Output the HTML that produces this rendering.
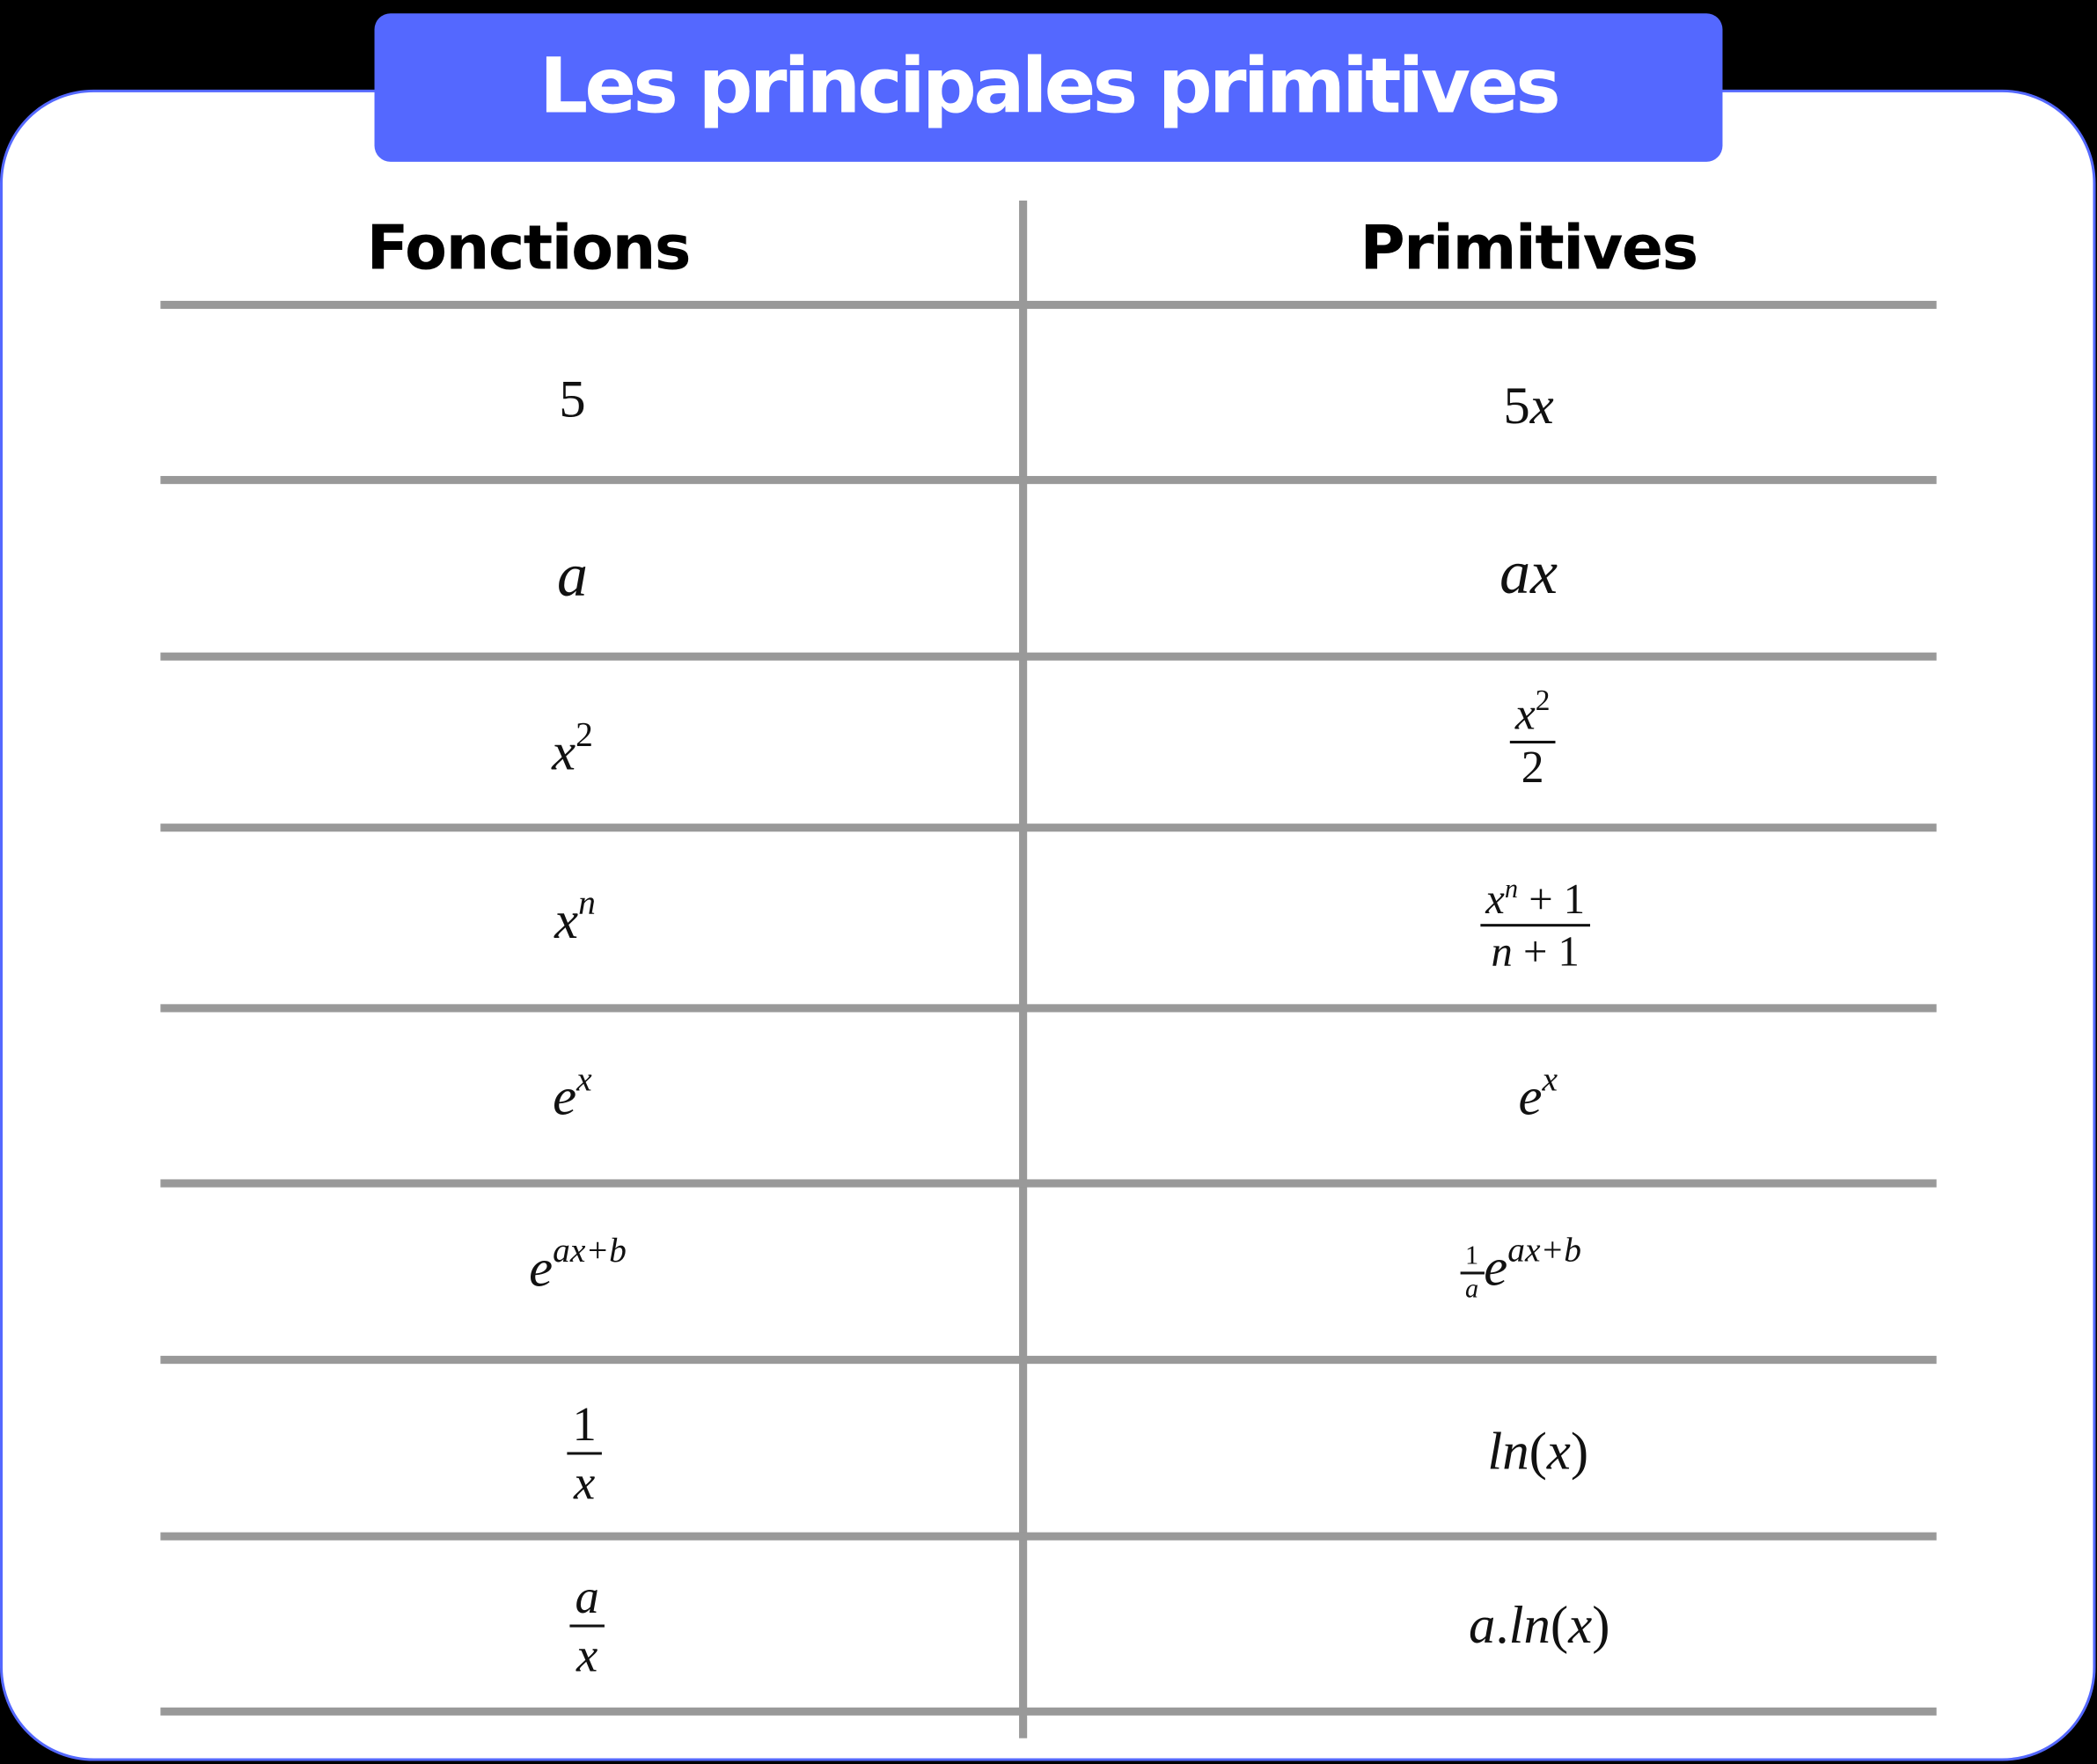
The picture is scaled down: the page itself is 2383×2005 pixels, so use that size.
<!DOCTYPE html>
<html><head><meta charset="utf-8"><style>
html,body{margin:0;padding:0;background:#000;width:2383px;height:2005px;overflow:hidden}
#w{position:absolute;left:0;top:0;width:1568px;height:1319px;transform:scale(1.51977);transform-origin:0 0}
.card{position:absolute;left:0;top:67px;height:1250px;background:#fff;border:2px solid #5468ff;border-radius:70px;box-sizing:border-box;width:1567px}
.title{position:absolute;left:280px;top:10px;width:1008px;height:111px;background:#5468ff;border-radius:12px;color:#fff;font:bold 57px "DejaVu Sans","Liberation Sans",sans-serif;text-align:center;line-height:110px;letter-spacing:-2.5px}
.h{position:absolute;left:120px;width:1328px;height:6px;background:#999}
.v{position:absolute;left:762px;top:150px;width:6px;height:1150px;background:#999}
.hd{position:absolute;top:150px;font:bold 46px "DejaVu Sans","Liberation Sans",sans-serif;width:500px;text-align:center;line-height:70px;letter-spacing:-1px}
.m{position:absolute;width:400px;text-align:center;font:italic 40px "Liberation Serif","DejaVu Serif",serif;color:#111;transform:translate(-50%,-50%)}
.r{font-style:normal}
sup{font-size:26px;vertical-align:18px;line-height:0}
.f{display:inline-block;vertical-align:middle;text-align:center}
.f .nu,.f .de{display:block;padding:0 4px}
.f .nu{border-bottom:2px solid #111}
</style></head><body><div id="w">
<div class="card"></div>
<div class="title">Les principales primitives</div>
<div class="hd" style="left:145px">Fonctions</div>
<div class="hd" style="left:893px">Primitives</div>
<div class="v"></div>
<div class="h" style="top:225px"></div>
<div class="h" style="top:356px"></div>
<div class="h" style="top:488px"></div>
<div class="h" style="top:616px"></div>
<div class="h" style="top:751px"></div>
<div class="h" style="top:882px"></div>
<div class="h" style="top:1014px"></div>
<div class="h" style="top:1146px"></div>
<div class="h" style="top:1277px"></div>

<div class="m r" style="left:428px;top:298px">5</div>
<div class="m" style="left:1143px;top:303px"><span class="r">5</span>x</div>
<div class="m" style="left:428px;top:430px;font-size:46px">a</div>
<div class="m" style="left:1143px;top:428px;font-size:46px">ax</div>
<div class="m" style="left:428px;top:562px">x<sup class="r">2</sup></div>
<div class="m" style="left:1146px;top:555px;font-size:34px"><div class="f"><span class="nu">x<sup class="r" style="font-size:22px;vertical-align:14px">2</sup></span><span class="de r">2</span></div></div>
<div class="m" style="left:1148px;top:692px;font-size:32px"><div class="f"><span class="nu">x<sup style="font-size:20px;vertical-align:12px">n</sup> <span class="r">+ 1</span></span><span class="de">n <span class="r">+ 1</span></span></div></div>
<div class="m" style="left:430px;top:688px">x<sup>n</sup></div>
<div class="m" style="left:428px;top:820px">e<sup>x</sup></div>
<div class="m" style="left:1150px;top:820px">e<sup>x</sup></div>
<div class="m" style="left:432px;top:948px">e<sup>ax+b</sup></div>
<div class="m" style="left:1137px;top:950px"><div class="f" style="font-size:20px"><span class="nu r">1</span><span class="de">a</span></div>e<sup>ax+b</sup></div>
<div class="m" style="left:437px;top:1087px;font-size:36px"><div class="f"><span class="nu r">1</span><span class="de">x</span></div></div>
<div class="m" style="left:1150px;top:1085px">ln<span class="r">(</span>x<span class="r">)</span></div>
<div class="m" style="left:439px;top:1216px;font-size:36px"><div class="f"><span class="nu">a</span><span class="de">x</span></div></div>
<div class="m" style="left:1151px;top:1215px">a<span class="r">.</span>ln<span class="r">(</span>x<span class="r">)</span></div>
</div></body></html>
